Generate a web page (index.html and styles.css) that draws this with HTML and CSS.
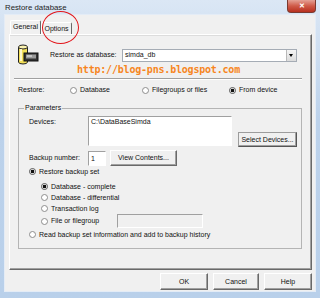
FILE: index.html
```html
<!DOCTYPE html>
<html lang="en">
<head>
  <meta charset="UTF-8">
  <title>Restore database</title>
  <link rel="stylesheet" href="styles.css">
</head>
<body>
  <div class="window">
    <div class="titlebar">
      <span class="title">Restore database</span>
      <span class="close-btn">&#x2715;</span>
    </div>

    <div class="client">
      <div class="tabs">
        <span class="tab active">General</span>
        <span class="tab">Options</span>
      </div>

      <div class="panel">
        <div class="dest-row">
          <svg class="db-icon" width="22" height="21" viewBox="0 0 22 21">
            <path d="M1.5 3 v15 a4.5 2 0 0 0 9 0 v-15" fill="#f2df58" stroke="#222" stroke-width="1"/>
            <ellipse cx="6" cy="3" rx="4.5" ry="2" fill="#fbf3b0" stroke="#222" stroke-width="1"/>
            <rect x="3" y="5" width="2" height="12" fill="#fff7c8"/>
            <rect x="7" y="9" width="14" height="8" fill="#333" stroke="#111" stroke-width="1"/>
            <rect x="9" y="10.5" width="10" height="4" fill="#9a9a9a"/>
            <rect x="10" y="11.5" width="5" height="1" fill="#eee"/>
          </svg>
          <span class="dest-label">Restore as database:</span>
          <div class="combo">
            <span class="combo-text">simda_db</span>
            <span class="combo-btn"></span>
          </div>
        </div>

        <div class="watermark">http://blog-pns.blogspot.com</div>
        <div class="separator"></div>

        <div class="restore-row">
          <span class="restore-label">Restore:</span>
          <label class="opt opt-db"><span class="radio"></span>Database</label>
          <label class="opt opt-fg"><span class="radio"></span>Filegroups or files</label>
          <label class="opt"><span class="radio checked"></span>From device</label>
        </div>

        <fieldset class="params">
          <legend>Parameters</legend>
          <div class="params-body">
            <div class="devices-row">
              <span class="field-label">Devices:</span>
              <div class="devices-box">C:\DataBaseSimda</div>
              <button class="btn btn-select">Select Devices...</button>
            </div>

            <div class="backup-row">
              <span class="field-label">Backup number:</span>
              <div class="num-box">1</div>
              <button class="btn btn-view">View Contents...</button>
            </div>

            <label class="opt row"><span class="radio checked"></span>Restore backup set</label>
            <div class="sub-opts">
              <label class="opt row"><span class="radio checked"></span>Database - complete</label>
              <label class="opt row"><span class="radio"></span>Database - differential</label>
              <label class="opt row"><span class="radio"></span>Transaction log</label>
              <div class="opt file-row">
                <span class="radio"></span><span class="file-label">File or filegroup</span>
                <div class="file-box"></div>
              </div>
            </div>
            <label class="opt row read-row"><span class="radio"></span>Read backup set information and add to backup history</label>
          </div>
        </fieldset>
      </div>

      <div class="buttons">
        <button class="btn btn-ok">OK</button>
        <button class="btn btn-cancel">Cancel</button>
        <button class="btn btn-help">Help</button>
      </div>
    </div>

    <span class="mark"></span>
  </div>
</body>
</html>
```

FILE: styles.css
```css
:root {
  --face: #f0f0f0;
  --shadow: #a0a0a0;
  --dark: #696969;
  --frame-top: #dbe7f5;
  --frame-bottom: #bcd2eb;
}

body {
  margin: 0;
  font-family: 'Liberation Sans', Arial, sans-serif;
  font-size: 7px;
  line-height: 10px;
  color: #111;
}

.window {
  position: relative;
  width: 320px;
  height: 298px;
  box-sizing: border-box;
  background: linear-gradient(180deg, var(--frame-top), var(--frame-bottom) 40%, #b9d0ea);
  display: flex;
  flex-direction: column;
}

/* title bar */
.titlebar {
  height: 14px;
  display: flex;
  justify-content: space-between;
  align-items: flex-start;
  padding: 0 4px 0 5px;
}

.title {
  font-size: 7.8px;
  line-height: 15px;
  color: #1e1e1e;
}

.close-btn {
  width: 29px;
  height: 13px;
  box-sizing: border-box;
  border: 1px solid #7a3a30;
  border-top: none;
  border-radius: 0 0 4px 4px;
  background: linear-gradient(180deg, #e4a195, #cf5a48 50%, #b8301f);
  color: #fff;
  font-size: 7px;
  line-height: 12px;
  text-align: center;
  font-weight: bold;
}

/* client area */
.client {
  flex: 1;
  margin: 0 4px 6px;
  border: 1px solid #e4ecf6;
  background: var(--face);
  padding: 5px 3px 0 4px;
  display: flex;
  flex-direction: column;
}

.tabs {
  height: 14px;
  display: flex;
  align-items: flex-end;
  padding-left: 1px;
}

.tab {
  height: 12px;
  width: 31px;
  box-sizing: border-box;
  border: 1px solid #fff;
  border-right-color: var(--dark);
  border-bottom: none;
  border-radius: 2px 2px 0 0;
  text-align: center;
  line-height: 12px;
}

.tab.active {
  height: 14px;
  line-height: 12px;
}

.panel {
  height: 236px;
  box-sizing: border-box;
  border: 1px solid #fff;
  border-right-color: var(--dark);
  border-bottom-color: var(--dark);
  box-shadow: inset -1px -1px 0 var(--shadow), inset 0 1px 0 #dcdcdc;
  padding: 9px 0 0;
}

.dest-row {
  display: flex;
  align-items: center;
  height: 21px;
  padding-left: 7px;
}

.db-icon {
  flex: none;
}

.dest-label {
  margin-left: 11px;
  width: 72px;
}

.combo {
  width: 175px;
  height: 13px;
  box-sizing: border-box;
  border: 1px solid #a5acb5;
  background: #fff;
  display: flex;
  justify-content: space-between;
  align-items: center;
  margin-top: 1px;
}

.combo-text {
  padding-left: 2px;
}

.combo-btn {
  width: 10px;
  height: 11px;
  box-sizing: border-box;
  border-left: 1px solid #b9b9b9;
  background: #e8e8e8 linear-gradient(#f4f4f4, #dcdcdc);
  position: relative;
}

.combo-btn::after {
  content: '';
  position: absolute;
  left: 2px;
  top: 4px;
  border-left: 2.5px solid transparent;
  border-right: 2.5px solid transparent;
  border-top: 3px solid #000;
}

.watermark {
  padding-left: 67px;
  font-family: 'DejaVu Sans Mono', 'Liberation Mono', monospace;
  font-weight: bold;
  font-size: 10px;
  letter-spacing: -0.2px;
  line-height: 10px;
  color: #f7861e;
}

.separator {
  margin: 3px 9px 0 4px;
  height: 1px;
  background: var(--shadow);
  border-bottom: 1px solid #fff;
}

.restore-row {
  display: flex;
  align-items: center;
  height: 10px;
  margin-top: 5px;
  padding-left: 8px;
}

.restore-label {
  width: 52px;
}

.opt {
  display: flex;
  align-items: center;
  white-space: nowrap;
}

.opt-db {
  width: 72px;
}

.opt-fg {
  width: 87px;
}

.radio {
  flex: none;
  width: 7px;
  height: 7px;
  box-sizing: border-box;
  border: 1px solid #8d8d8d;
  border-radius: 50%;
  background: #fff;
  margin-right: 3px;
}

.radio.checked {
  border-color: #555;
  background: radial-gradient(circle, #111 1.6px, #fff 2.1px);
}

/* parameters group */
.params {
  margin: 8px 0 0 8px;
  width: 284px;
  box-sizing: border-box;
  padding: 0;
  border: 1px solid #b4b4b4;
}

.params legend {
  margin-left: 5px;
  padding: 0 1px;
  line-height: 10px;
}

.params-body {
  padding: 3px 0 8px 10px;
}

.devices-row {
  display: flex;
  align-items: flex-start;
}

.field-label {
  width: 59px;
}

.devices-row .field-label {
  margin-top: 1px;
}

.devices-box {
  width: 144px;
  height: 30px;
  box-sizing: border-box;
  background: #fff;
  border: 1px solid var(--shadow);
  border-right-color: #fff;
  border-bottom-color: #fff;
  padding: 0 2px;
}

.btn {
  font-family: inherit;
  font-size: inherit;
  line-height: 10px;
  color: #111;
  background: var(--face);
  box-sizing: border-box;
  border: 1px solid #fff;
  border-right-color: var(--dark);
  border-bottom-color: var(--dark);
  box-shadow: inset -1px -1px 0 var(--shadow);
  padding: 0;
  margin: 0;
}

.btn-select {
  width: 59px;
  height: 15px;
  margin: 16px 0 0 6px;
  border-color: #9c9c9c #555 #555 #9c9c9c;
}

.backup-row {
  display: flex;
  align-items: center;
  margin-top: 3px;
  height: 16px;
}

.num-box {
  width: 18px;
  height: 15px;
  box-sizing: border-box;
  background: #fff;
  border: 1px solid var(--shadow);
  border-right-color: #fff;
  border-bottom-color: #fff;
  padding: 2px 0 0 2px;
}

.btn-view {
  width: 67px;
  height: 16px;
  margin-left: 4px;
}

.row {
  height: 11px;
}

.sub-opts {
  margin-top: 4px;
  padding-left: 12px;
}

.file-row {
  height: 14px;
}

.file-label {
  width: 66px;
}

.file-box {
  width: 86px;
  height: 14px;
  box-sizing: border-box;
  border: 1px solid var(--shadow);
  border-right-color: #fff;
  border-bottom-color: #fff;
}

.read-row {
  margin-top: 1px;
}

/* dialog buttons */
.buttons {
  display: flex;
  justify-content: flex-end;
  gap: 5px;
  margin-top: 3px;
}

.buttons .btn {
  height: 17px;
}

.btn-ok,
.btn-help {
  width: 48px;
}

.btn-cancel {
  width: 46px;
}

/* red annotation circle */
.mark {
  position: absolute;
  left: 42px;
  top: 11px;
  width: 37px;
  height: 33px;
  box-sizing: border-box;
  border: 1.5px solid #e3161c;
  border-radius: 50%;
}
```
